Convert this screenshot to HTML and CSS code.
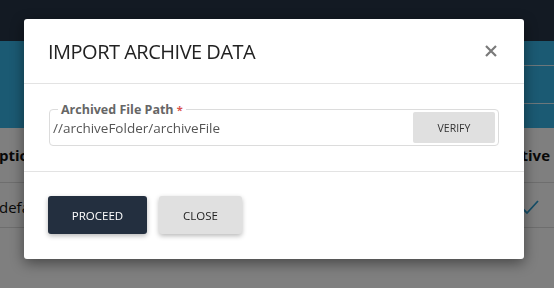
FILE: index.html
```html
<!DOCTYPE html>
<html lang="en">
<head>
    <meta charset="UTF-8">
    <meta name="viewport" content="width=device-width, initial-scale=1.0">
    <title>Import Archive Data</title>
    <link rel="stylesheet" href="styles.css">
</head>
<body>
    <div class="page">
        <div class="topbar"></div>
        <div class="banner">
            <div class="banner-rows">
                <div class="banner-row"></div>
                <div class="banner-row"></div>
                <div class="banner-row"></div>
            </div>
        </div>
        <div class="grid">
            <div class="grid-row grid-head">
                <div class="cell cell-desc">ption</div>
                <div class="cell cell-active">Active</div>
            </div>
            <div class="grid-row">
                <div class="cell cell-desc cell-light">default</div>
                <div class="cell cell-active">
                    <svg class="check" width="18" height="16" viewBox="0 0 18 16">
                        <path d="M1 9 L6 14 L17 2" fill="none" stroke="currentColor" stroke-width="1.8"/>
                    </svg>
                </div>
            </div>
        </div>
    </div>

    <div class="backdrop"></div>

    <div class="modal">
        <div class="modal-header">
            <h1 class="modal-title">IMPORT ARCHIVE DATA</h1>
            <button class="modal-close" aria-label="Close">
                <svg width="12" height="12" viewBox="0 0 12 12">
                    <path d="M1 1 L11 11 M11 1 L1 11" stroke="currentColor" stroke-width="2.2"/>
                </svg>
            </button>
        </div>
        <div class="modal-body">
            <div class="field">
                <span class="field-label">Archived File Path <span class="required">*</span></span>
                <span class="field-value">//archiveFolder/archiveFile</span>
                <button class="btn btn-verify">VERIFY</button>
            </div>
        </div>
        <div class="modal-footer">
            <button class="btn btn-primary">PROCEED</button>
            <button class="btn btn-secondary">CLOSE</button>
        </div>
    </div>
</body>
</html>
```

FILE: styles.css
```css
body {
    margin: 0;
    font-family: 'Open Sans', 'Noto Sans', sans-serif;
    background-color: #ffffff;
    overflow: hidden;
}
.page {
    width: 554px;
    height: 288px;
}
.topbar {
    height: 41px;
    background-color: #263446;
}
.banner {
    height: 87px;
    background-color: #36b4e6;
    display: flex;
    justify-content: flex-end;
}
.banner-rows {
    width: 40px;
    display: flex;
    flex-direction: column;
}
.banner-row {
    height: 24px;
    border-bottom: 1px solid #d8eef6;
}
.banner-row:nth-child(2) {
    height: 37px;
}
.banner-row:last-child {
    border-bottom: none;
}
.grid-row {
    display: flex;
    justify-content: space-between;
    align-items: center;
    height: 44px;
    border-bottom: 1px solid #dcdcdc;
}
.grid-head {
    height: 54px;
}
.cell {
    font-size: 15px;
    font-weight: bold;
    color: #111;
}
.cell-light {
    font-weight: normal;
    padding-top: 3px;
}
.cell-desc {
    margin-left: -1px;
}
.cell-active {
    width: 30px;
    padding-right: 4px;
    text-align: right;
    white-space: nowrap;
    display: flex;
    justify-content: flex-end;
}
.check {
    color: #2f9fd0;
    margin-right: 11px;
    margin-top: 3px;
}
.backdrop {
    position: fixed;
    inset: 0;
    background-color: rgba(0, 0, 0, 0.5);
}
.modal {
    position: absolute;
    left: 24px;
    top: 19px;
    width: 500px;
    background-color: white;
    border-radius: 3px;
    box-shadow: 0 4px 14px rgba(0, 0, 0, 0.45);
}
.modal-header {
    height: 64px;
    padding: 0 25px 0 24px;
    display: flex;
    align-items: center;
    justify-content: space-between;
    border-bottom: 1px solid #e3e3e3;
}
.modal-title {
    margin: 0;
    font-size: 20px;
    letter-spacing: -0.5px;
    font-weight: normal;
    color: #222;
}
.modal-close {
    border: none;
    background: none;
    padding: 0;
    margin-right: 2px;
    color: #7a7a7a;
    display: flex;
    cursor: pointer;
}
.modal-body {
    padding: 25px 25px 25px;
    border-bottom: 1px solid #e3e3e3;
}
.field {
    position: relative;
    display: flex;
    align-items: center;
    height: 31px;
    padding: 2px 3px 2px 3px;
    border: 1px solid #dcdcdc;
    border-radius: 4px;
}
.field-label {
    position: absolute;
    left: 8px;
    top: -9px;
    padding: 0 3px;
    background-color: white;
    font-size: 12.5px;
    font-weight: bold;
    color: #666;
    line-height: 18px;
}
.required {
    color: #d9534f;
    font-size: 11px;
}
.field-value {
    flex: 1;
    font-size: 13.5px;
    color: #555;
}
.btn {
    border: none;
    font-family: inherit;
    cursor: pointer;
}
.btn-verify {
    width: 82px;
    height: 31px;
    font-size: 10.5px;
    color: #333;
    background-color: #e0e0e0;
    border-radius: 2px;
}
.modal-footer {
    display: flex;
    gap: 12px;
    padding: 24px 24px 25px;
}
.btn-primary, .btn-secondary {
    height: 38px;
    font-size: 11.5px;
    border-radius: 3px;
    box-shadow: 0 2px 5px rgba(0, 0, 0, 0.28);
}
.btn-primary {
    width: 99px;
    background-color: #232f3f;
    color: white;
}
.btn-secondary {
    width: 83px;
    background-color: #e0e0e0;
    color: #222;
}
```
